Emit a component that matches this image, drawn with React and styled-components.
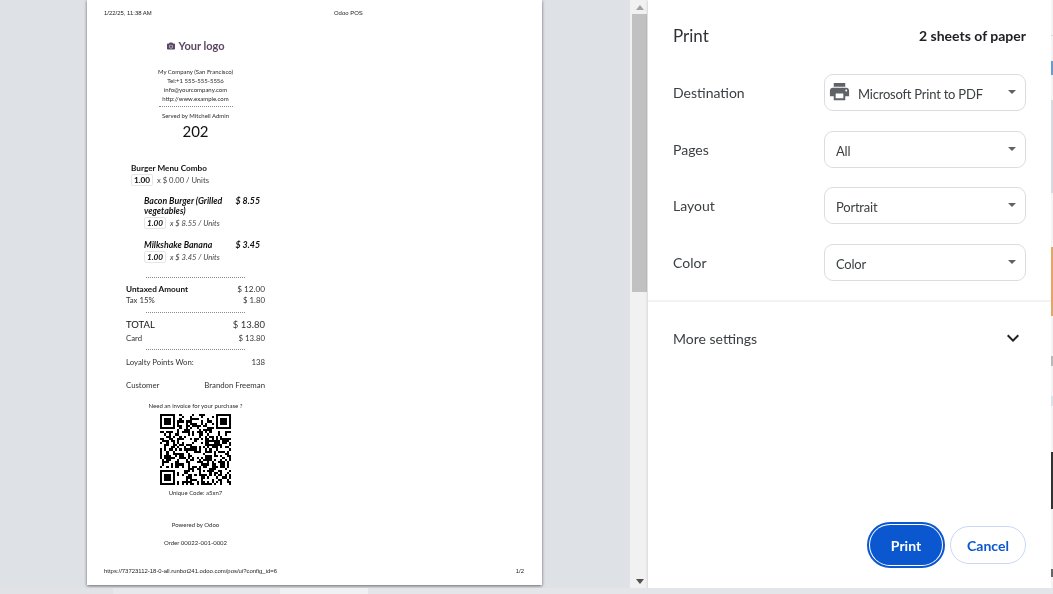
import React from 'react';
import styled, { createGlobalStyle } from 'styled-components';
import { MdPrint, MdExpandMore } from 'react-icons/md';
import { FaCamera } from 'react-icons/fa';

const GlobalStyle = createGlobalStyle`
  html, body {
    margin: 0;
    padding: 0;
    background: #dee1e6;
    overflow: hidden;
  }
`;

const Shell = styled.div`
  width: 1053px;
  height: 594px;
  display: flex;
  flex-direction: column;
  overflow: hidden;
  font-family: 'Lato', sans-serif;
  filter: blur(0.3px);
`;

const Main = styled.div`
  display: flex;
  height: 588px;
`;

const Preview = styled.div`
  width: 630px;
  padding-left: 87px;
  box-sizing: border-box;
  background: #dee1e6;
`;

const Sheet = styled.div`
  width: 455px;
  height: 585px;
  box-sizing: border-box;
  padding: 9px 18px 10px 17px;
  background: #fff;
  box-shadow: 0 1px 3px rgba(0, 0, 0, 0.55);
  display: flex;
  flex-direction: column;
`;

const SheetBody = styled.div`
  flex: 1;
  display: flex;
  flex-direction: column;
  will-change: opacity;
`;

const PrintLine = styled.div`
  display: grid;
  grid-template-columns: ${p => p.$columns};
  height: 8px;
  font: 5.95px/8px 'Liberation Sans', sans-serif;
  color: #222;
`;

const Receipt = styled.div`
  width: 139px;
  margin: 22px 0 0 22px;
  color: #2b2b2b;
  font-size: 6px;
  line-height: 9px;
  display: flex;
  flex-direction: column;
  flex: 1;
`;

const Logo = styled.div`
  display: flex;
  align-items: center;
  justify-content: center;
  gap: 4px;
  height: 13px;
  font-size: 11px;
  font-weight: 700;
  color: #5a4763;
`;

const Center = styled.div`
  text-align: center;
  margin-top: ${p => p.$top || 0}px;
`;

const OrderNumber = styled.div`
  text-align: center;
  font-size: 15px;
  line-height: 18px;
  margin-top: 2px;
  color: #111;
`;

const Rule = styled.div`
  width: ${p => p.$width}px;
  margin: ${p => p.$top}px auto ${p => p.$bottom}px;
  border-top: 1px dotted #8a8a8a;
`;

const Product = styled.div`
  margin: ${p => p.$top}px 0 0 ${p => p.$indent}px;
  width: ${p => (p.$italic ? 116 : 128)}px;
  font-style: ${p => (p.$italic ? 'italic' : 'normal')};
`;

const ProductHead = styled.div`
  display: flex;
  justify-content: space-between;
  font-size: ${p => (p.$italic ? 8.8 : 8.2)}px;
  line-height: 10px;
  font-weight: 700;
  color: #111;
`;

const ProductName = styled.span`
  width: 90px;
`;

const QtyLine = styled.div`
  display: flex;
  align-items: center;
  gap: 4px;
  height: 12px;
  margin-top: 1px;
  font-size: 7.6px;
  color: #444;
`;

const Qty = styled.span`
  width: 20px;
  height: 10px;
  border: 1px solid #e6e6e6;
  border-radius: 2px;
  text-align: center;
  font-size: 8.2px;
  line-height: 10px;
  font-weight: 700;
  color: #111;
`;

const Line = styled.div`
  display: flex;
  justify-content: space-between;
  margin-top: ${p => p.$top || 0}px;
  font-size: ${p => (p.$big ? 9.5 : p.$bold ? 8.2 : 7.8)}px;
  line-height: ${p => (p.$big ? 12 : 10)}px;
  font-weight: ${p => (p.$bold ? 700 : 400)};
  color: ${p => (p.$bold || p.$big ? '#111' : '#333')};
`;

const Amount = styled.span`
  font-weight: 400;
  color: #333;
`;

const QrWrap = styled.div`
  display: flex;
  justify-content: center;
  margin-top: 4px;
`;

const Scrollbar = styled.div`
  width: 18px;
  background: #f1f1f1;
  display: flex;
  flex-direction: column;
  align-items: center;
  box-sizing: border-box;
  padding-left: 1px;
`;

const ArrowBox = styled.div`
  height: 14px;
  flex: none;
  display: flex;
  align-items: center;
  justify-content: center;
`;

const Tri = styled.span`
  width: 0;
  height: 0;
  border-left: 4px solid transparent;
  border-right: 4px solid transparent;
  ${p => (p.$up ? `border-bottom: 5px solid ${p.$color};` : `border-top: 5px solid ${p.$color};`)}
`;

const Thumb = styled.div`
  width: 15px;
  height: 278px;
  flex: none;
  background: #c1c1c1;
`;

const Track = styled.div`
  flex: 1;
`;

const Panel = styled.div`
  width: 403px;
  background: #fff;
  box-shadow: 0 1px 3px rgba(0, 0, 0, 0.2);
  color: #3c4043;
`;

const PanelBody = styled.div`
  height: 100%;
  display: flex;
  flex-direction: column;
  will-change: opacity;
`;

const Header = styled.div`
  display: flex;
  align-items: center;
  justify-content: space-between;
  height: 24px;
  margin: 23px 25px 0 25px;
`;

const Title = styled.div`
  font-size: 17px;
  color: #303134;
`;

const Sheets = styled.div`
  font-size: 14px;
  font-weight: 700;
  color: #202124;
`;

const Settings = styled.div`
  display: flex;
  flex-direction: column;
  gap: 19.7px;
  margin: 27px 26px 0 25px;
  padding-bottom: 19px;
`;

const Row = styled.div`
  display: grid;
  grid-template-columns: 151px 202px;
  align-items: center;
  font-size: 14px;
`;

const Select = styled.div`
  position: relative;
  height: 37px;
  box-sizing: border-box;
  border: 1px solid #dadce0;
  border-radius: 9px;
  display: flex;
  align-items: center;
  gap: 7px;
  padding: 3px 0 0 ${p => (p.$icon ? 3 : 11)}px;
  font-size: 13px;
  letter-spacing: -0.22px;
`;

const Caret = styled.span`
  position: absolute;
  top: 15px;
  right: 9px;
  width: 0;
  height: 0;
  border-left: 4px solid transparent;
  border-right: 4px solid transparent;
  border-top: 4px solid #5f6368;
`;

const Divider = styled.div`
  height: 2px;
  background: #f3f3f3;
`;

const More = styled.div`
  display: flex;
  align-items: center;
  justify-content: space-between;
  margin: 24px 26px 0 25px;
  height: 24px;
  font-size: 14px;
`;

const Actions = styled.div`
  margin: auto 25px 23px 0;
  display: flex;
  justify-content: flex-end;
  align-items: center;
  gap: 5px;
`;

const PrintButton = styled.button`
  width: 72px;
  height: 40px;
  border: none;
  border-radius: 20px;
  background: #0b57d0;
  color: #fff;
  font: 700 14px 'Lato', sans-serif;
  outline: 2px solid #0b57d0;
  outline-offset: 1px;
  margin-right: 3px;
`;

const CancelButton = styled.button`
  width: 76px;
  height: 38px;
  box-sizing: border-box;
  border: 1px solid #c7d7f7;
  border-radius: 19px;
  background: #fff;
  color: #0b57d0;
  font: 700 14px 'Lato', sans-serif;
`;

const Edge = styled.div`
  width: 2px;
  display: flex;
  flex-direction: column;
`;

const EdgeBit = styled.div`
  height: ${p => p.$h}px;
  flex: none;
  background: ${p => p.$c};
`;

const BottomStrip = styled.div`
  height: 6px;
  display: flex;
`;

const StripBit = styled.div`
  width: ${p => p.$w}px;
  flex: none;
  background: ${p => p.$c};
`;

const edgeBits = [
  [35, '#f4f4f4'], [1, '#d8d8d8'], [25, '#f4f4f4'], [14, '#6a9bd0'], [25, '#f4f4f4'], [93, '#d6d9de'],
  [54, '#f4f4f4'], [69, '#e0a868'], [40, '#f4f4f4'], [10, '#b8b8b8'], [30, '#f4f4f4'], [10, '#d8e4ea'],
  [46, '#f4f4f4'], [57, '#333333'], [60, '#f4f4f4'], [8, '#666666'], [11, '#f4f4f4'],
];

const stripBits = [
  [113, '#e0e2e6'], [167, '#e6e8eb'], [88, '#f0f1f2'], [685, '#e3e5e8'],
];

// seeded pattern for the body of the code, finder squares are real
const QR_SIZE = 33;
function inFinder(x, y) {
  return (x < 8 && y < 8) || (x >= QR_SIZE - 8 && y < 8) || (x < 8 && y >= QR_SIZE - 8);
}
function qrModules() {
  const cells = [];
  let seed = 202;
  for (let y = 0; y < QR_SIZE; y++) {
    for (let x = 0; x < QR_SIZE; x++) {
      seed = (seed * 1103515245 + 12345) & 0x7fffffff;
      if (inFinder(x, y)) continue;
      if (((seed >> 16) & 255) < 125) cells.push([x, y]);
    }
  }
  return cells;
}

function Finder({ x, y }) {
  return (
    <g>
      <path fillRule="evenodd" d={`M${x} ${y}h7v7h-7zM${x + 1} ${y + 1}v5h5v-5z`} />
      <rect x={x + 2} y={y + 2} width="3" height="3" />
    </g>
  );
}

function QrCode() {
  return (
    <svg width="71" height="71" viewBox="0 0 33 33" shapeRendering="crispEdges" fill="#000">
      <Finder x={0} y={0} />
      <Finder x={26} y={0} />
      <Finder x={0} y={26} />
      {qrModules().map(([x, y]) => (
        <rect key={`${x}-${y}`} x={x} y={y} width="1" height="1" />
      ))}
    </svg>
  );
}

function Dropdown({ value, icon }) {
  return (
    <Select $icon={icon}>
      {icon && <MdPrint size={23} color="#5f6368" style={{ marginTop: -6 }} />}
      {value}
      <Caret />
    </Select>
  );
}

export default function App() {
  return (
    <Shell>
      <GlobalStyle />
      <Main>
        <Preview>
          <Sheet>
            <SheetBody>
              <PrintLine $columns="230px 1fr">
                <span>1/22/25, 11:38 AM</span>
                <span>Odoo POS</span>
              </PrintLine>
              <Receipt>
                <Logo><FaCamera size={8} />Your logo</Logo>
                <Center $top={15}>My Company (San Francisco)</Center>
                <Center>Tel:+1 555-555-5556</Center>
                <Center>info@yourcompany.com</Center>
                <Center>http://www.example.com</Center>
                <Rule $width={74} $top={3} $bottom={4} />
                <Center>Served by Mitchell Admin</Center>
                <OrderNumber>202</OrderNumber>

                <Product $indent={5} $top={23}>
                  <ProductHead><ProductName>Burger Menu Combo</ProductName></ProductHead>
                  <QtyLine><Qty>1.00</Qty>x $ 0.00 / Units</QtyLine>
                </Product>
                <Product $indent={18} $top={10} $italic>
                  <ProductHead $italic><ProductName>Bacon Burger (Grilled vegetables)</ProductName><span>$ 8.55</span></ProductHead>
                  <QtyLine><Qty>1.00</Qty>x $ 8.55 / Units</QtyLine>
                </Product>
                <Product $indent={18} $top={11} $italic>
                  <ProductHead $italic><ProductName>Milkshake Banana</ProductName><span>$ 3.45</span></ProductHead>
                  <QtyLine><Qty>1.00</Qty>x $ 3.45 / Units</QtyLine>
                </Product>

                <Rule $width={99} $top={14} $bottom={6} />
                <Line $bold>Untaxed Amount<Amount>$ 12.00</Amount></Line>
                <Line $top={1}>Tax 15%<span>$ 1.80</span></Line>
                <Rule $width={99} $top={7} $bottom={6} />
                <Line $big>TOTAL<Amount>$ 13.80</Amount></Line>
                <Line $top={2}>Card<span>$ 13.80</span></Line>
                <Rule $width={99} $top={6} $bottom={7} />
                <Line>Loyalty Points Won:<span>138</span></Line>
                <Line $top={13}>Customer<span>Brandon Freeman</span></Line>

                <Center $top={11}>Need an invoice for your purchase ?</Center>
                <QrWrap><QrCode /></QrWrap>
                <Center $top={3}>Unique Code: a5xn7</Center>
                <Center $top={23}>Powered by Odoo</Center>
                <Center $top={9}>Order 00022-001-0002</Center>
              </Receipt>
              <PrintLine $columns="1fr auto">
                <span>https://73723112-18-0-all.runbot241.odoo.com/pos/ui?config_id=6</span>
                <span>1/2</span>
              </PrintLine>
            </SheetBody>
          </Sheet>
        </Preview>

        <Scrollbar>
          <ArrowBox><Tri $up $color="#a3a3a3" /></ArrowBox>
          <Thumb />
          <Track />
          <ArrowBox><Tri $color="#505050" /></ArrowBox>
        </Scrollbar>

        <Panel>
          <PanelBody>
            <Header>
              <Title>Print</Title>
              <Sheets>2 sheets of paper</Sheets>
            </Header>
            <Settings>
              <Row>Destination<Dropdown icon value="Microsoft Print to PDF" /></Row>
              <Row>Pages<Dropdown value="All" /></Row>
              <Row>Layout<Dropdown value="Portrait" /></Row>
              <Row>Color<Dropdown value="Color" /></Row>
            </Settings>
            <Divider />
            <More>
              More settings
              <MdExpandMore size={24} color="#202124" />
            </More>
            <Actions>
              <PrintButton>Print</PrintButton>
              <CancelButton>Cancel</CancelButton>
            </Actions>
          </PanelBody>
        </Panel>

        <Edge>
          {edgeBits.map(([h, c], i) => <EdgeBit key={i} $h={h} $c={c} />)}
        </Edge>
      </Main>
      <BottomStrip>
        {stripBits.map(([w, c], i) => <StripBit key={i} $w={w} $c={c} />)}
      </BottomStrip>
    </Shell>
  );
}
